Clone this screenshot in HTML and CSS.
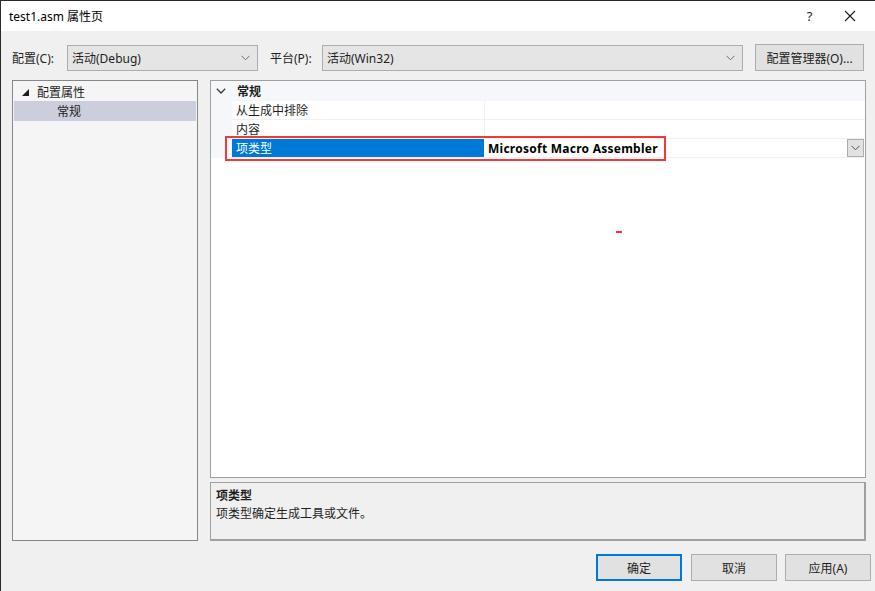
FILE: index.html
```html
<!DOCTYPE html>
<html lang="zh-CN">
<head>
<meta charset="UTF-8">
<title>test1.asm 属性页</title>
<link rel="stylesheet" href="styles.css">
</head>
<body>
<div class="window">
    <div class="titlebar">
        <span class="title">test1.asm 属性页</span>
        <span class="help">?</span>
        <span class="close">
            <svg width="12" height="12" viewBox="0 0 12 12"><path d="M1 1 L11 11 M11 1 L1 11" stroke="#1b1b1b" stroke-width="1.1" fill="none"/></svg>
        </span>
    </div>

    <div class="toolbar">
        <span class="label">配置(C):</span>
        <div class="combo combo-config">
            <span>活动(Debug)</span>
            <svg class="chev" width="9" height="6" viewBox="0 0 9 6"><path d="M0.5 0.8 L4.5 4.8 L8.5 0.8" stroke="#6d6d6d" fill="none"/></svg>
        </div>
        <span class="label label-platform">平台(P):</span>
        <div class="combo combo-platform">
            <span>活动(Win32)</span>
            <svg class="chev" width="9" height="6" viewBox="0 0 9 6"><path d="M0.5 0.8 L4.5 4.8 L8.5 0.8" stroke="#6d6d6d" fill="none"/></svg>
        </div>
        <button class="btn btn-manager">配置管理器(O)...</button>
    </div>

    <div class="main">
        <div class="tree">
            <div class="tree-item">
                <svg class="tri" width="7" height="7" viewBox="0 0 7 7"><path d="M7 0 L7 7 L0 7 Z" fill="#1e1e1e"/></svg>
                <span>配置属性</span>
            </div>
            <div class="tree-item child selected">常规</div>
        </div>

        <div class="right">
            <div class="grid">
                <div class="grid-head">
                    <svg class="head-chev" width="10" height="6" viewBox="0 0 10 6"><path d="M0.8 0.8 L5 5 L9.2 0.8" stroke="#3c3c3c" stroke-width="1.3" fill="none"/></svg>
                    <span>常规</span>
                </div>
                <div class="row">
                    <div class="gutter"></div>
                    <div class="name">从生成中排除</div>
                    <div class="value"></div>
                </div>
                <div class="row">
                    <div class="gutter"></div>
                    <div class="name">内容</div>
                    <div class="value"></div>
                </div>
                <div class="row row-selected">
                    <div class="gutter"></div>
                    <div class="name">项类型</div>
                    <div class="value">
                        <span class="value-text">Microsoft Macro Assembler</span>
                        <span class="drop">
                            <svg width="9" height="6" viewBox="0 0 9 6"><path d="M0.5 0.8 L4.5 4.8 L8.5 0.8" stroke="#555" fill="none"/></svg>
                        </span>
                    </div>
                </div>
            </div>
            <div class="desc">
                <div class="desc-title">项类型</div>
                <div class="desc-text">项类型确定生成工具或文件。</div>
            </div>
        </div>
    </div>

    <div class="footer">
        <button class="btn btn-ok">确定</button>
        <button class="btn">取消</button>
        <button class="btn">应用(A)</button>
    </div>

    <div class="highlight"></div>
    <div class="mark"></div>
</div>
</body>
</html>
```

FILE: styles.css
```css
* {
    box-sizing: border-box;
}

body {
    margin: 0;
    font-family: "Noto Sans", "Noto Sans CJK SC", sans-serif;
    font-size: 12px;
    color: #1e1e1e;
    background: #f0f0f0;
}

.window {
    position: relative;
    width: 875px;
    height: 591px;
    background: #f0f0f0;
    border-left: 1px solid #2b2b2b;
    border-top: 1px solid #2b2b2b;
    overflow: hidden;
}

.titlebar {
    height: 30px;
    background: #ffffff;
    display: flex;
    align-items: center;
    padding-left: 8px;
}

.title {
    flex: 1;
    color: #000;
}

.help {
    width: 45px;
    text-align: center;
    font-size: 13px;
    margin-right: -5px;
}

.close {
    width: 46px;
    display: flex;
    justify-content: center;
    margin-right: 2px;
}

.toolbar {
    display: flex;
    align-items: center;
    height: 27px;
    margin-top: 13px;
    padding-left: 11px;
}

.label {
    width: 55px;
}

.label-platform {
    width: 52px;
    margin-left: 12px;
}

.combo {
    height: 26px;
    background: #e5e5e5;
    border: 1px solid #adadad;
    display: flex;
    align-items: center;
    justify-content: space-between;
    padding: 0 7px 0 4px;
}

.combo-config {
    width: 191px;
}

.combo-platform {
    width: 421px;
}

.btn {
    font-family: inherit;
    font-size: 12px;
    color: #1e1e1e;
    height: 27px;
    width: 86px;
    background: #e1e1e1;
    border: 1px solid #adadad;
    padding: 0;
}

.btn-manager {
    width: 109px;
    margin-left: 12px;
}

.main {
    display: flex;
    margin-top: 9px;
    padding-left: 11px;
    gap: 12px;
    height: 461px;
}

.tree {
    width: 186px;
    background: #f5f5f5;
    border: 1px solid #828790;
    padding: 1px;
}

.tree-item {
    height: 19px;
    display: flex;
    align-items: center;
    padding-left: 8px;
    gap: 8px;
}

.tree-item .tri {
    margin-top: 1px;
}

.tree-item.child {
    padding-left: 43px;
    height: 20px;
}

.selected {
    background: #cccedb;
}

.right {
    width: 656px;
    display: flex;
    flex-direction: column;
    gap: 4px;
}

.grid {
    height: 398px;
    background: #ffffff;
    border: 1px solid #a0a0a0;
}

.grid-head {
    height: 20px;
    background: #f5f7fa;
    display: flex;
    align-items: center;
    font-weight: bold;
    padding-left: 5px;
}

.head-chev {
    margin-right: 11px;
}

.row {
    display: flex;
    height: 19px;
}

.row .gutter {
    width: 21px;
    background: #f5f7fa;
}

.row .name {
    width: 253px;
    padding-left: 4px;
    padding-top: 1px;
    line-height: 17px;
    border-bottom: 1px solid #f0f0f0;
    border-right: 1px solid #f0f0f0;
}

.row .value {
    flex: 1;
    border-bottom: 1px solid #f0f0f0;
    display: flex;
    align-items: center;
    justify-content: space-between;
    padding-left: 3px;
    padding-right: 1px;
}

.row-selected .name {
    background: #0078d7;
    color: #ffffff;
    border-right: 1px solid #ffffff;
}

.row-selected .value {
    font-weight: bold;
    color: #000;
}

.value-text {
    letter-spacing: 0.25px;
    padding-top: 1px;
}

.drop {
    width: 17px;
    height: 18px;
    background: #e1e1e1;
    border: 1px solid #adadad;
    display: flex;
    align-items: center;
    justify-content: center;
}

.desc {
    flex: 1;
    background: #f0f0f0;
    border: 1px solid #a0a0a0;
    border-bottom-width: 2px;
    border-right-width: 2px;
    padding: 3px 5px;
}

.desc-title {
    font-weight: bold;
    height: 18px;
}

.footer {
    display: flex;
    justify-content: flex-end;
    gap: 9px;
    margin-top: 13px;
    padding-right: 4px;
}

.footer .btn + .btn + .btn {
    margin-left: -1px;
}

.btn-ok {
    border: 2px solid #0078d7;
}

.highlight {
    position: absolute;
    left: 224px;
    top: 135px;
    width: 441px;
    height: 25px;
    border: 2px solid #f03a3a;
}

.mark {
    position: absolute;
    left: 615px;
    top: 230px;
    width: 6px;
    height: 2px;
    background: #f03a3a;
}
```
